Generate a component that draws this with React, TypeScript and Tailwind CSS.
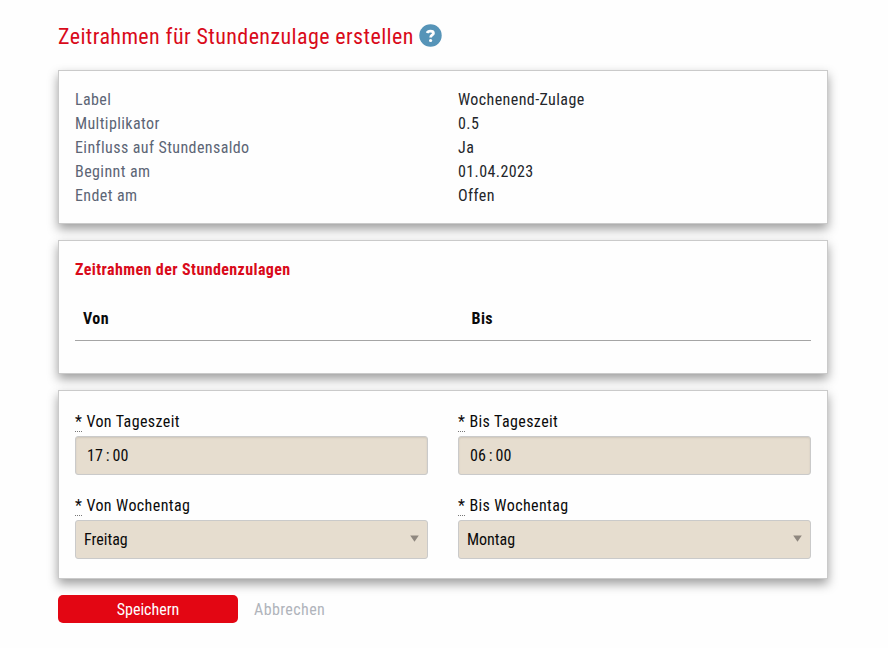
import type { ReactNode } from 'react';

const details = [
  ['Label', 'Wochenend-Zulage'],
  ['Multiplikator', '0.5'],
  ['Einfluss auf Stundensaldo', 'Ja'],
  ['Beginnt am', '01.04.2023'],
  ['Endet am', 'Offen'],
];

function Card({ className, children }: { className: string; children: ReactNode }) {
  return (
    <section
      className={`border border-[#cacaca] bg-[#fefefe] px-4 shadow-[0_5px_10px_0_rgba(0,0,0,0.38)] ${className}`}
    >
      {children}
    </section>
  );
}

function Field({ label, children }: { label: string; children: ReactNode }) {
  return (
    <div>
      <div className="flex h-[29px] items-start gap-[4.4px] leading-[30px]">
        <abbr className="h-[25px] w-[7px] border-b border-dotted border-[#777] leading-[30px]">*</abbr>
        <span>{label}</span>
      </div>
      {children}
    </div>
  );
}

function Time({ h, m }: { h: string; m: string }) {
  return (
    <div className="flex h-[39px] items-center rounded-[3px] border border-[#cacaca] bg-[#e6ddcf] pl-[11px] tracking-normal shadow-[inset_0_1px_2px_rgba(10,10,10,0.1)]">
      <span>{h}</span>
      <span className="px-[3px]">:</span>
      <span>{m}</span>
    </div>
  );
}

function Select({ value }: { value: string }) {
  return (
    <div className="flex h-[39px] items-center justify-between rounded-[3px] border border-[#cacaca] bg-[#e6ddcf] pr-2 pl-2 tracking-normal">
      <span>{value}</span>
      <svg className="-mt-0.5" width="9" height="7" viewBox="0 0 9 7">
        <path d="M0.2 0.4H8.8L4.5 6.8Z" fill="#8f877f" />
      </svg>
    </div>
  );
}

export default function App() {
  return (
    <main className="h-[648px] w-[888px] overflow-hidden bg-[#fefefe] pl-[58px] font-['Roboto_Condensed',Roboto,sans-serif] text-base leading-6 tracking-[0.4px] text-[#0a0a0a] [font-stretch:75%]">
      <div className="w-[770px]">
        <h1 className="flex h-[70px] items-start gap-[5px] pt-[21px] text-[22px] leading-8 text-[#d90a1a]">
          <span>Zeitrahmen für Stundenzulage erstellen</span>
          <svg className="mt-[3px]" width="23" height="23" viewBox="0 0 23 23">
            <circle cx="11.5" cy="11.5" r="11.2" fill="#5694b8" />
            <path d="M8.1 8.9C8.6 7.6 9.7 7.1 11.4 7.1C13.4 7.1 14.5 7.9 14.5 9.2C14.5 10.9 11.6 11 11.6 13.5" fill="none" stroke="#fefefe" strokeWidth="2.7" />
            <circle cx="11.6" cy="16.5" r="1.6" fill="#fefefe" />
          </svg>
        </h1>
        <div className="flex flex-col gap-4">
          <Card className="h-[154px] pt-[17px]">
            <dl className="grid grid-cols-[383px_1fr]">
              {details.map(([k, v]) => (
                <div key={k} className="contents">
                  <dt className="text-[#5c6575]">{k}</dt>
                  <dd className="text-[#23262b]">{v}</dd>
                </div>
              ))}
            </dl>
          </Card>
          <Card className="h-[134px] pt-[17px]">
            <h2 className="font-bold text-[#d90a1a]">Zeitrahmen der Stundenzulagen</h2>
            <div className="mt-4 grid h-[43px] grid-cols-[388.5px_1fr] border-b border-[#a5a5a5] px-2 pt-[9px] font-bold">
              <span>Von</span>
              <span>Bis</span>
            </div>
          </Card>
          <Card className="grid h-[189px] grid-cols-2 content-start gap-x-[30px] gap-y-4 pt-4">
            <Field label="Von Tageszeit">
              <Time h="17" m="00" />
            </Field>
            <Field label="Bis Tageszeit">
              <Time h="06" m="00" />
            </Field>
            <Field label="Von Wochentag">
              <Select value="Freitag" />
            </Field>
            <Field label="Bis Wochentag">
              <Select value="Montag" />
            </Field>
          </Card>
        </div>
        <div className="mt-4 flex items-center gap-4">
          <button className="h-7 w-[180px] rounded-[5px] bg-[#e30613] pt-0.5 leading-6 tracking-normal text-[#fefefe]">Speichern</button>
          <a className="pt-0.5 text-[#b0b4bb]">Abbrechen</a>
        </div>
      </div>
    </main>
  );
}
